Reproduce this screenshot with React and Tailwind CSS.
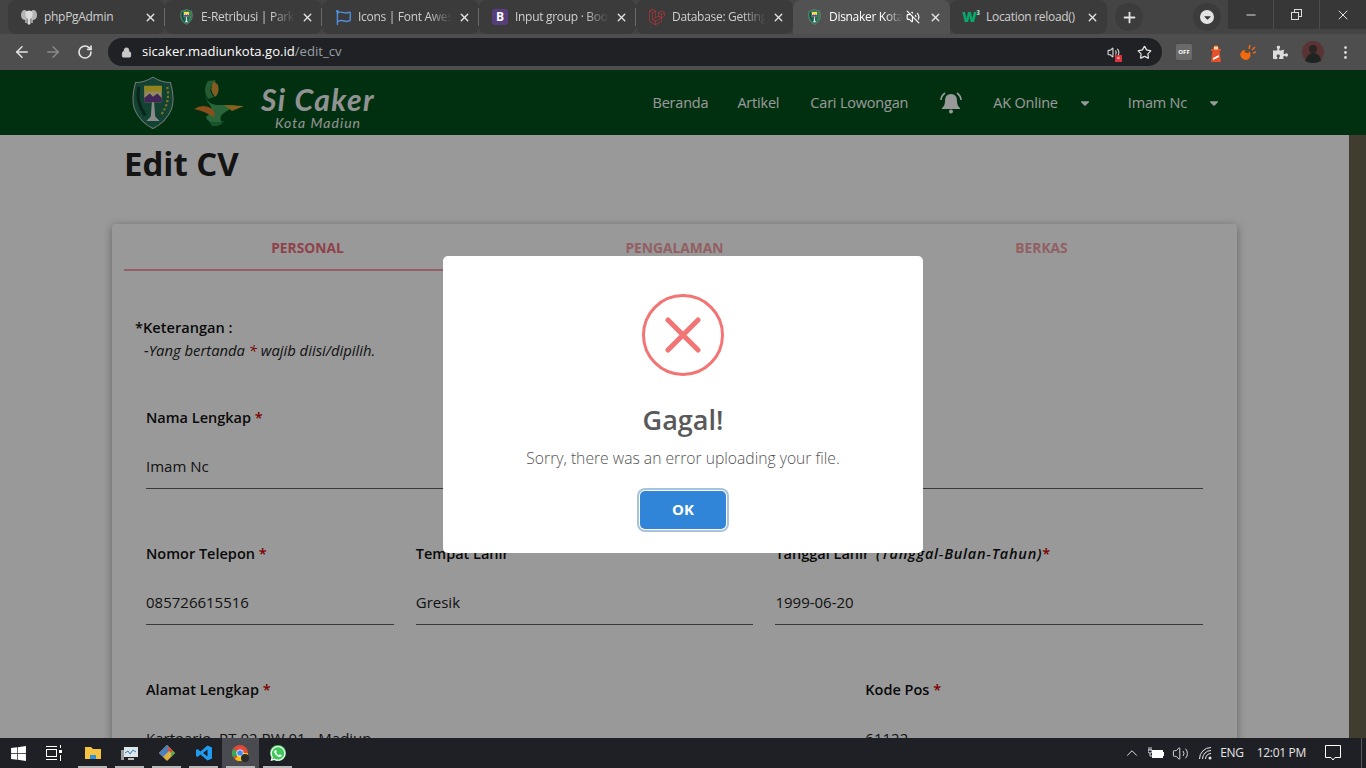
import { ArrowLeft, ArrowRight, RotateCw, Lock, Star, MoreVertical, Plus, X, Minus, ChevronUp, VolumeOff, Volume2 } from 'lucide-react';
import { FaWindows, FaWhatsapp, FaPuzzlePiece, FaRegFlag, FaCaretDown } from 'react-icons/fa';
import { SiLaravel } from 'react-icons/si';

const sans = { fontFamily: '"Open Sans", sans-serif' };
const logoFont = { fontFamily: '"Lato", sans-serif' };

function Crest({ size = 16 }) {
  return (
    <svg width={size} height={size * 1.22} viewBox="0 0 40 49">
      <path d="M4 6 Q12 6 20 1 Q28 6 36 6 Q40 20 37 30 Q32 42 20 48 Q8 42 3 30 Q0 20 4 6 Z" fill="#1f6f52" stroke="#b9c4bc" strokeWidth="1" />
      <rect x="12" y="9" width="16" height="15" fill="#f0e6a0" />
      <rect x="12" y="9" width="16" height="5" fill="#f4dc30" />
      <path d="M12 24 L12 20 L17 16 L20 19 L24 16 L28 20 L28 24 Z" fill="#6b3f90" />
      <path d="M19 24 L21 24 L22 37 L26 41 L14 41 L18 37 Z" fill="#e8e8e8" />
      <path d="M7 10 Q4 24 13 36" fill="none" stroke="#123f2c" strokeWidth="3" />
      <path d="M33 10 Q36 24 27 36" fill="none" stroke="#d9c230" strokeWidth="2" strokeDasharray="2 2" />
    </svg>
  );
}

function Elephant() {
  return (
    <svg width="16" height="16" viewBox="0 0 16 16">
      <ellipse cx="3.5" cy="6" rx="3.5" ry="5" fill="#b5b5b5" />
      <ellipse cx="12.5" cy="6" rx="3.5" ry="5" fill="#b5b5b5" />
      <path d="M4.5 3 Q8 0 11.5 3 Q12 8 9.5 10 L9.5 15 Q8 16 6.5 15 L6.5 10 Q4 8 4.5 3 Z" fill="#dcdcdc" />
      <path d="M5 10 L5 14 M11 10 L11 14" stroke="#fff" strokeWidth="1" />
    </svg>
  );
}

const tabs = [
  { title: 'phpPgAdmin', icon: <Elephant /> },
  { title: 'E-Retribusi | Parki', icon: <Crest size={13} />, fade: true },
  { title: 'Icons | Font Awes', icon: <FaRegFlag size={15} color="#4f8fe0" />, fade: true },
  { title: 'Input group · Boo', icon: <span className="flex h-[16px] w-[16px] items-center justify-center rounded-[3px] bg-[#563d7c] text-[12px] font-bold text-white">B</span>, fade: true },
  { title: 'Database: Getting', icon: <SiLaravel size={16} color="#d9323a" />, fade: true },
  { title: 'Disnaker Kota', icon: <Crest size={13} />, active: true, muted: true, fade: true },
  {
    title: 'Location reload()',
    icon: (
      <span className="flex items-start font-black leading-none text-[#04aa6d]">
        <span className="text-[14px]">W</span>
        <span className="text-[6px] text-[#9fd8c0]">3</span>
      </span>
    ),
  },
];

function BrowserChrome() {
  return (
    <div className="shrink-0" style={sans}>
      <div className="flex h-[34px] items-start bg-[#444444] pl-[8px]">
        {tabs.map((tab, i) => (
          <div
            key={tab.title}
            className={`relative flex h-[34px] w-[157px] items-center pl-[13px] pr-[8px] text-[12px] tracking-[-0.3px] ${
              tab.active ? 'rounded-t-lg bg-[#525252] text-white' : 'rounded-lg bg-[#3b3b3b] text-[#cfcfcf]'
            }`}
          >
            <span className="flex w-[16px] shrink-0 justify-center">{tab.icon}</span>
            <span className={`ml-[7px] min-w-0 flex-1 overflow-hidden whitespace-nowrap ${tab.fade ? '[mask-image:linear-gradient(to_right,black_75%,transparent)]' : ''}`}>
              {tab.title}
            </span>
            {tab.muted && <VolumeOff size={14} className="ml-[3px] mr-[3px] shrink-0 text-white" />}
            <X size={13} strokeWidth={2.5} className="ml-[6px] shrink-0 text-[#e3e3e3]" />
            {i < 4 && <span className="absolute right-0 top-[8px] h-[18px] w-px bg-[#6a6a6a]" />}
          </div>
        ))}
        <div className="ml-[8px] mt-[3px] flex h-[28px] w-[28px] items-center justify-center rounded-full bg-[#3c3c3c]">
          <Plus size={17} strokeWidth={2.5} className="text-[#e3e3e3]" />
        </div>
        <div className="ml-[50px] mt-[3px] flex h-[28px] w-[28px] items-center justify-center rounded-full bg-[#3c3c3c]">
          <span className="flex h-[14px] w-[14px] items-center justify-center rounded-full bg-[#e3e3e3]">
            <FaCaretDown size={11} color="#333" />
          </span>
        </div>
        <div className="ml-auto flex">
          <div className="flex h-[29px] w-[46px] items-center justify-center border-r border-[#4c4c4c] bg-[#373737]"><Minus size={14} className="text-[#ddd]" /></div>
          <div className="flex h-[29px] w-[46px] items-center justify-center border-r border-[#4c4c4c] bg-[#373737]">
            <span className="relative block h-[11px] w-[11px]">
              <span className="absolute right-0 top-0 h-[8px] w-[8px] border border-[#ddd]" />
              <span className="absolute bottom-0 left-0 h-[8px] w-[8px] border border-[#ddd] bg-[#373737]" />
            </span>
          </div>
          <div className="flex h-[29px] w-[46px] items-center justify-center bg-[#373737]"><X size={16} strokeWidth={1.5} className="text-[#ddd]" /></div>
        </div>
      </div>
      <div className="flex h-[36px] items-center bg-[#4e4e4e] pl-[13px]">
        <ArrowLeft size={18} className="text-[#e3e3e3]" />
        <ArrowRight size={18} className="ml-[13px] text-[#8a8a8a]" />
        <RotateCw size={16} strokeWidth={2.5} className="ml-[15px] text-[#e3e3e3]" />
        <div className="ml-[15px] flex h-[28px] w-[1054px] items-center rounded-full bg-[#202124] pl-[13px] pr-[10px] text-[13.1px]">
          <Lock size={11} fill="#c9c9c9" className="text-[#c9c9c9]" />
          <span className="ml-[10px] text-white">sicaker.madiunkota.go.id</span>
          <span className="text-[#9aa0a6]">/edit_cv</span>
          <span className="relative ml-auto">
            <Volume2 size={13} className="text-[#ddd]" />
            <span className="absolute -bottom-[3px] -right-[2px] flex h-[7px] w-[7px] items-center justify-center bg-[#d9323a] text-[6px] leading-none text-white">×</span>
          </span>
          <Star size={15} className="ml-[17px] text-[#e3e3e3]" />
        </div>
        <div className="ml-[6px] flex items-center">
          <span className="flex w-[32px] justify-center">
            <span className="flex h-[16px] w-[16px] items-center justify-center rounded-[2px] bg-[#6a6a6a] text-[6px] font-bold text-white">OFF</span>
          </span>
          <span className="flex w-[32px] justify-center">
            <svg width="12" height="19" viewBox="0 0 12 19">
              <path d="M3 5 Q6 -1 9 5 L9 6 L11 6 L11 8 L9.5 8 L11 19 L1 19 L2.5 8 L1 8 L1 6 L3 6 Z" fill="#e8502a" />
              <rect x="4" y="3.5" width="4" height="3" fill="#ffd9a0" />
              <path d="M3 15 L9 12 L9 14 L3 17 Z" fill="#fff" />
            </svg>
          </span>
          <span className="flex w-[32px] justify-center">
            <svg width="16" height="17" viewBox="0 0 16 17">
              <path d="M3 6 L10 8 Q12 13 7 16 Q1 16 0 10 Z" fill="#f06a10" />
              <path d="M4 8 L9 9 Q8 6 4 8 Z" fill="#2a2a2a" />
              <path d="M9 5 L10 1 M12 6 L15 3 M13 9 L16 8" stroke="#f06a10" strokeWidth="1.5" />
            </svg>
          </span>
          <span className="flex w-[32px] justify-center"><FaPuzzlePiece size={15} className="text-[#ddd]" /></span>
          <span className="flex w-[33px] justify-center">
            <svg width="22" height="22" viewBox="0 0 22 22">
              <circle cx="11" cy="11" r="11" fill="#5a3434" />
              <circle cx="11" cy="8" r="4" fill="#2a2422" />
              <path d="M3 20 Q6 12 11 12 Q18 12 19 20 Q11 24 3 20 Z" fill="#1d2422" />
            </svg>
          </span>
          <span className="flex w-[32px] justify-center"><MoreVertical size={17} className="text-[#ddd]" /></span>
        </div>
      </div>
    </div>
  );
}

function SiteNav() {
  return (
    <div className="flex h-[65px] shrink-0 items-center bg-[#00501a] pl-[131px] pr-[145px] text-[14.5px] tracking-[-0.2px] text-white shadow-md" style={sans}>
      <Crest size={44} />
      <svg width="50" height="47" viewBox="0 0 50 47" className="ml-[19px]">
        <path d="M14 2 Q8 10 14 20 L20 18 Q12 10 22 1 Z" fill="#3c9a55" />
        <path d="M20 2 Q14 10 21 18 Q26 14 24 6 Z" fill="#d99a3a" />
        <path d="M12 12 Q10 24 22 26 L42 26 L30 34 Q24 38 28 43 Q14 46 12 38 Q20 32 16 26 Q10 20 12 12 Z" fill="#45a860" />
        <path d="M0 30 Q10 24 18 30 Q22 34 20 38 Q10 32 0 30 Z" fill="#e8802c" />
        <path d="M30 26 L50 27 L38 32 Z" fill="#e0a030" />
        <path d="M14 41 Q20 46 30 42 Q26 48 18 47 Z" fill="#2a8a4a" />
      </svg>
      <div className="ml-[17px] mt-[6px] flex flex-col items-center text-[#f4f4f4]" style={logoFont}>
        <span className="text-[30px] font-bold italic leading-[34px] tracking-[1.4px]">Si Caker</span>
        <span className="text-[14px] italic leading-[14px] tracking-[1px]">Kota Madiun</span>
      </div>
      <div className="ml-auto flex items-center">
        <span>Beranda</span>
        <span className="ml-[29px]">Artikel</span>
        <span className="ml-[31px]">Cari Lowongan</span>
        <svg width="24" height="22" viewBox="0 0 24 22" fill="#fff" className="ml-[31px]">
          <path d="M12 2 Q18 2 18 9 Q18 14 21 16 L21 17 L3 17 L3 16 Q6 14 6 9 Q6 2 12 2 Z" />
          <circle cx="12" cy="19.5" r="2" />
          <path d="M2 8 Q2 4 6 1" fill="none" stroke="#fff" strokeWidth="1.6" />
          <path d="M22 8 Q22 4 18 1" fill="none" stroke="#fff" strokeWidth="1.6" />
        </svg>
        <span className="ml-[30px]">AK Online</span>
        <FaCaretDown size={14} className="ml-[20px]" />
        <span className="ml-[36px]">Imam Nc</span>
        <FaCaretDown size={14} className="ml-[20px]" />
      </div>
    </div>
  );
}

function Field({ span, label, value }) {
  return (
    <div className={`${span} px-[11px]`}>
      <div className="h-[22px] whitespace-nowrap text-[14.5px] font-semibold text-[#111]">{label}</div>
      <div className="mt-[26px] border-b border-[#5f5f5f] pb-[11px] text-[15px] leading-[22px] text-[#222]">{value}</div>
    </div>
  );
}

const Req = () => <span className="text-[#d00000]">*</span>;

function EditForm() {
  return (
    <div className="min-w-0 flex-1 overflow-hidden bg-white" style={sans}>
      <h1 className="ml-[124px] mt-[7px] text-[33px] font-bold leading-[44px] text-[#222]">Edit CV</h1>
      <div className="ml-[112px] mt-[38px] w-[1125px] rounded-t-[3px] bg-white px-[12px] pb-[40px] shadow-[0_2px_10px_rgba(0,0,0,0.35)]">
        <div className="grid grid-cols-3 grid-rows-[47px] text-center text-[13.8px] font-bold leading-[48px]">
          <div className="h-[47px] border-b-2 border-[#f6a2a8] text-[#ee6e7b]">PERSONAL</div>
          <div className="h-[47px] text-[#f4a0a6]">PENGALAMAN</div>
          <div className="h-[47px] text-[#f4a0a6]">BERKAS</div>
        </div>
        <div className="mt-[45px] pl-[11px] text-[14.6px] leading-[23px] text-[#222]">
          <div className="font-semibold text-[#111]">*Keterangan :</div>
          <div className="pl-[9px] text-[14.8px] italic">-Yang bertanda <Req /> wajib diisi/dipilih.</div>
        </div>
        <div className="mt-[45px] grid grid-cols-12 gap-y-[54px] px-[11px]">
          <Field span="col-span-12" label={<>Nama Lengkap <Req /></>} value="Imam Nc" />
          <Field span="col-span-3" label={<>Nomor Telepon <Req /></>} value="085726615516" />
          <Field span="col-span-4" label="Tempat Lahir" value="Gresik" />
          <Field span="col-span-5" label={<>Tanggal Lahir <i className="ml-[3px] tracking-[0.75px]">(Tanggal-Bulan-Tahun)</i><Req /></>} value="1999-06-20" />
          <Field span="col-span-8" label={<>Alamat Lengkap <Req /></>} value="Kartoarjo, RT 02 RW 01 - Madiun" />
          <Field span="col-span-4" label={<>Kode Pos <Req /></>} value="61122" />
        </div>
      </div>
    </div>
  );
}

function ErrorModal() {
  return (
    <div className="absolute inset-0 flex items-center justify-center bg-black/40" style={sans}>
      <div className="flex h-[297px] w-[480px] flex-col items-center rounded-[5px] bg-white">
        <div className="mt-[38px] flex h-[82px] w-[82px] items-center justify-center rounded-full border-[3px] border-[#f27474]">
          <svg width="36" height="36" viewBox="0 0 36 36" stroke="#f27474" strokeWidth="5" strokeLinecap="round">
            <path d="M3 3 L33 33 M33 3 L3 33" />
          </svg>
        </div>
        <h2 className="mt-[25px] text-[27px] font-semibold leading-[38px] text-[#595959]">Gagal!</h2>
        <p className="mt-[8px] text-[15.7px] font-light leading-[22px] text-[#545454]">Sorry, there was an error uploading your file.</p>
        <button className="mt-[22px] h-[38px] w-[86px] shrink-0 rounded-[5px] bg-[#3085d8] text-[15px] font-bold text-white shadow-[0_0_0_1px_#fff,0_0_0_3px_#a9c3dc]">
          OK
        </button>
      </div>
    </div>
  );
}

function TaskItem({ active, children }) {
  return (
    <div className={`relative flex h-full w-[37px] items-center justify-center ${active ? 'bg-[#4a4b50]' : ''}`}>
      {children}
      <span className="absolute bottom-0 left-[4px] right-[4px] h-[2px] bg-[#b8b8b8]" />
    </div>
  );
}

function Taskbar() {
  return (
    <div className="flex h-[30px] shrink-0 items-center bg-[#1f2026] text-white" style={sans}>
      <div className="flex h-full w-[36px] items-center justify-center"><FaWindows size={17} /></div>
      <div className="flex h-full w-[36px] items-center justify-center">
        <svg width="16" height="16" viewBox="0 0 16 16" fill="none" stroke="#fff" strokeWidth="1">
          <path d="M0 1.5 H11 M0 14.5 H11" />
          <rect x="0.5" y="4.5" width="10" height="7" />
          <rect x="13" y="5" width="3" height="3" fill="#fff" stroke="none" />
          <path d="M14.5 0 V3 M14.5 10 V16" />
        </svg>
      </div>
      <div className="ml-[2px] flex h-full">
        <TaskItem>
          <svg width="16" height="16" viewBox="0 0 16 16">
            <path d="M0 2 H6 L8 4 H16 V14 H0 Z" fill="#f5c242" />
            <rect x="5" y="10" width="6" height="4" fill="#2f8fd8" />
          </svg>
        </TaskItem>
        <TaskItem>
          <svg width="17" height="15" viewBox="0 0 17 15">
            <rect x="3" y="1" width="14" height="10" fill="#dfe6ea" />
            <path d="M4 7 L7 5 L9 8 L12 4 L15 6" fill="none" stroke="#2f7fc0" />
            <rect x="0" y="4" width="3" height="10" fill="#9a9a9a" />
            <rect x="7" y="12" width="6" height="2" fill="#bbb" />
          </svg>
        </TaskItem>
        <TaskItem>
          <svg width="16" height="16" viewBox="0 0 16 16">
            <path d="M8 0 L16 8 L8 16 L0 8 Z" fill="#e0b040" />
            <path d="M8 0 L12 4 L4 12 L0 8 Z" fill="#4a7fc0" />
            <path d="M10 2 L14 6 L12 8 L8 4 Z" fill="#d8503a" />
            <path d="M12 8 L14 6 L16 8 L12 12 Z" fill="#4caf50" />
          </svg>
        </TaskItem>
        <TaskItem>
          <svg width="16" height="16" viewBox="0 0 16 16">
            <path d="M11.5 0.5 L16 2.5 V13.5 L11.5 15.5 L4.5 9.5 L1.5 12 L0 11 V5 L1.5 4 L4.5 6.5 Z M11.5 4.5 L7 8 L11.5 11.5 Z" fill="#1f9cf0" fillRule="evenodd" />
          </svg>
        </TaskItem>
        <TaskItem active>
          <svg width="17" height="17" viewBox="0 0 17 17">
            <circle cx="8" cy="8" r="8" fill="#e04a3a" />
            <path d="M8 8 L1.5 12.6 A8 8 0 0 1 1 4 Z" fill="#34a853" />
            <path d="M8 8 L16 8 A8 8 0 0 1 3 14.2 Z" fill="#f4c20d" />
            <circle cx="8" cy="8" r="3.6" fill="#fff" />
            <circle cx="8" cy="8" r="2.8" fill="#4285f4" />
            <circle cx="13" cy="13" r="4" fill="#2a2a2a" />
          </svg>
        </TaskItem>
        <TaskItem>
          <span className="flex h-[16px] w-[16px] items-center justify-center rounded-full bg-[#3fc75a]">
            <FaWhatsapp size={17} color="#fff" />
          </span>
        </TaskItem>
      </div>
      <div className="ml-auto flex h-full items-center pr-[4px] text-[12px] tracking-[-0.3px] text-[#e6e6e6]">
        <ChevronUp size={18} strokeWidth={1.3} />
        <svg width="16" height="12" viewBox="0 0 16 12" className="ml-[7px]" fill="#fff">
          <rect x="4" y="3" width="11" height="8" />
          <rect x="15" y="5" width="1" height="4" />
          <path d="M1 0 V3 M3 0 V3 M0 3 H4 V5 Q4 6 2 6 Q0 6 0 5 Z M2 6 V9 H4" stroke="#fff" strokeWidth="0.8" fill="none" />
        </svg>
        <Volume2 size={17} strokeWidth={1.3} className="ml-[8px]" />
        <svg width="13" height="13" viewBox="0 0 13 13" fill="none" stroke="#e6e6e6" strokeWidth="1" className="ml-[10px]">
          <path d="M0.5 12 A11.5 11.5 0 0 1 12 0.5" />
          <path d="M3.5 12 A8.5 8.5 0 0 1 12 3.5" />
          <path d="M6.5 12 A5.5 5.5 0 0 1 12 6.5" />
          <circle cx="11" cy="11" r="1.5" fill="#e6e6e6" stroke="none" />
        </svg>
        <span className="ml-[8px]">ENG</span>
        <span className="ml-[13px]">12:01 PM</span>
        <svg width="16" height="16" viewBox="0 0 16 16" fill="none" stroke="#fff" strokeWidth="1" className="ml-[19px]">
          <path d="M0.5 0.5 H15.5 V12.5 H10 L8 15 L6 12.5 H0.5 Z" />
        </svg>
        <span className="ml-[20px] h-full w-px bg-[#55565c]" />
      </div>
    </div>
  );
}

export default function App() {
  return (
    <div className="flex h-screen w-full flex-col overflow-hidden">
      <BrowserChrome />
      <div className="relative flex min-h-0 flex-1 flex-col">
        <SiteNav />
        <div className="flex min-h-0 flex-1">
          <EditForm />
          <div className="w-[17px] shrink-0 bg-[#6b6650]" />
        </div>
        <ErrorModal />
      </div>
      <Taskbar />
    </div>
  );
}
